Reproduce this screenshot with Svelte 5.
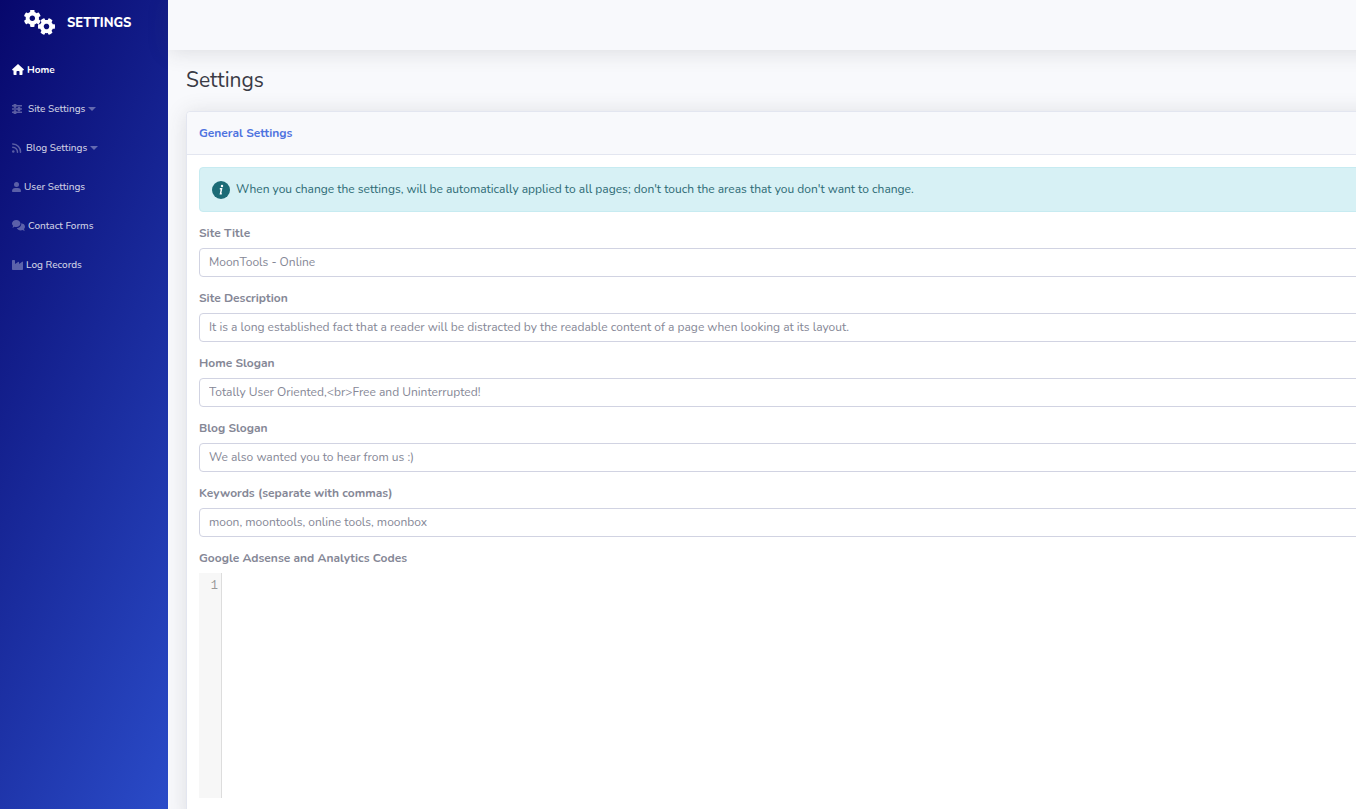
<script>
  const menu = [
    { label: 'Home', icon: 'home', active: true },
    { label: 'Site Settings', icon: 'sliders', dropdown: true },
    { label: 'Blog Settings', icon: 'rss', dropdown: true },
    { label: 'User Settings', icon: 'user' },
    { label: 'Contact Forms', icon: 'comments' },
    { label: 'Log Records', icon: 'industry' },
  ];

  let fields = $state([
    { id: 'site-title', label: 'Site Title', value: 'MoonTools - Online' },
    {
      id: 'site-description',
      label: 'Site Description',
      value: 'It is a long established fact that a reader will be distracted by the readable content of a page when looking at its layout.',
    },
    { id: 'home-slogan', label: 'Home Slogan', value: 'Totally User Oriented,<br>Free and Uninterrupted!' },
    { id: 'blog-slogan', label: 'Blog Slogan', value: 'We also wanted you to hear from us :)' },
    { id: 'keywords', label: 'Keywords (separate with commas)', value: 'moon, moontools, online tools, moonbox' },
  ]);

  let code = $state('');
  let lines = $derived(code.split('\n').length);

  const gear =
    'M487.4 315.7l-42.6-24.6c4.3-23.2 4.3-47 0-70.2l42.6-24.6c4.9-2.8 7.1-8.6 5.5-14-11.1-35.6-30-67.8-54.7-94.6-3.8-4.1-10-5.1-14.8-2.3L380.8 110c-17.9-15.4-38.5-27.3-60.8-35.1V25.8c0-5.6-3.9-10.5-9.4-11.7-36.7-8.2-74.3-7.8-109.2 0-5.5 1.2-9.4 6.1-9.4 11.7V75c-22.2 7.9-42.8 19.8-60.8 35.1L88.7 85.5c-4.9-2.8-11-1.9-14.8 2.3-24.7 26.7-43.6 58.9-54.7 94.6-1.7 5.4.6 11.2 5.5 14L67.3 221c-4.3 23.2-4.3 47 0 70.2l-42.6 24.6c-4.9 2.8-7.1 8.6-5.5 14 11.1 35.6 30 67.8 54.7 94.6 3.8 4.1 10 5.1 14.8 2.3l42.6-24.6c17.9 15.4 38.5 27.3 60.8 35.1v49.2c0 5.6 3.9 10.5 9.4 11.7 36.7 8.2 74.3 7.8 109.2 0 5.5-1.2 9.4-6.1 9.4-11.7v-49.2c22.2-7.9 42.8-19.8 60.8-35.1l42.6 24.6c4.9 2.8 11 1.9 14.8-2.3 24.7-26.7 43.6-58.9 54.7-94.6 1.5-5.5-.7-11.3-5.6-14.1zM256 336c-44.1 0-80-35.9-80-80s35.9-80 80-80 80 35.9 80 80-35.9 80-80 80z';
</script>

{#snippet icon(name)}
  {#if name === 'home'}
    <svg class="icon" width="12" height="11" viewBox="0 0 24 22" aria-hidden="true">
      <path d="M12 0 24 11l-1.600 2H21v7.500q0 1.500-1.500 1.500H15v-6.500q0-1.500-1.500-1.500h-3Q9 14 9 15.500V22H4.500Q3 22 3 20.500V13H1.600L0 11z" />
    </svg>
  {:else if name === 'sliders'}
    <svg class="icon" width="13" height="10" viewBox="0 0 26 20" aria-hidden="true">
      <path d="M0 2h3a3 3 0 0 1 6 0H20v3H9a3 3 0 0 1-6 0H0zM0 8.500h11a3 3 0 0 1 6 0H20v3h-3a3 3 0 0 1-6 0H0zM0 15h3a3 3 0 0 1 6 0H20v3H9a3 3 0 0 1-6 0H0z" />
    </svg>
  {:else if name === 'rss'}
    <svg class="icon" width="11" height="10" viewBox="0 0 22 20" aria-hidden="true">
      <circle cx="2.500" cy="17" r="2.500" />
      <path class="stroke" d="M1.500 2A15.500 15.500 0 0 1 17 18.500M1.500 8.500a9.500 9.500 0 0 1 9.500 10" />
    </svg>
  {:else if name === 'user'}
    <svg class="icon" width="9" height="10" viewBox="0 0 18 20" aria-hidden="true">
      <circle cx="9" cy="5" r="5" />
      <path d="M0 18.500C0 14 2.800 12 6.500 12h5c3.700 0 6.500 2 6.500 6.500q0 1.500-1.500 1.500h-15Q0 20 0 18.500z" />
    </svg>
  {:else if name === 'comments'}
    <svg class="icon" width="13" height="11" viewBox="0 0 26 22" aria-hidden="true">
      <path d="M8.500 0C13.200 0 17 3.100 17 7s-3.800 7-8.500 7q-2 0-3.700-.7Q2.800 15 .4 15q1.700-1.800 1.900-3.700Q0 9.500 0 7c0-3.900 3.800-7 8.500-7z" />
      <path d="M18.500 6.500C23 7 26 9.700 26 13.300q0 2.500-2 4.500.3 2.300 1.700 4-2.700-.2-4.700-1.600-1.600.6-3.500.6c-3.600 0-6.700-1.900-7.900-4.700 5.300-.3 9.300-4 8.900-9.600z" />
    </svg>
  {:else}
    <svg class="icon" width="11" height="10" viewBox="0 0 22 20" aria-hidden="true">
      <path d="M1.500 0h3Q6 0 6 1.500V8l7-4.500q1-.5 1 .8V8l6.500-4.500Q22 2.700 22 4.300v14.200q0 1.500-1.500 1.500h-19Q0 20 0 18.500v-17Q0 0 1.500 0z" />
    </svg>
  {/if}
{/snippet}

<div class="wrapper">
  <nav class="sidebar">
    <a class="brand" href="#settings">
      <svg width="32" height="26" viewBox="0 0 32 26" aria-hidden="true">
        <path transform="translate(-.5 -.5) scale(.0345)" d={gear} />
        <path transform="translate(22.500 16.500) rotate(30) scale(.0345) translate(-256 -256)" d={gear} />
      </svg>
      <span>SETTINGS</span>
    </a>
    <ul>
      {#each menu as item}
        <li>
          <a class="nav-link" class:active={item.active} href="#{item.icon}">
            {@render icon(item.icon)}
            <span>{item.label}</span>
            {#if item.dropdown}
              <i class="caret"></i>
            {/if}
          </a>
        </li>
      {/each}
    </ul>
  </nav>

  <div class="content">
    <header class="topbar"></header>
    <main>
      <h1>Settings</h1>
      <section class="card">
        <div class="card-header">
          <h2>General Settings</h2>
        </div>
        <form class="card-body">
          <div class="alert" role="alert">
            <svg width="18" height="18" viewBox="0 0 18 18" aria-hidden="true">
              <circle cx="9" cy="9" r="9" />
              <circle class="mark" cx="10" cy="5" r="1.200" />
              <path class="mark-line" d="M7.800 7.800h1.700L8.500 12.800h1.300" />
            </svg>
            <span>When you change the settings, will be automatically applied to all pages; don't touch the areas that you don't want to change.</span>
          </div>

          {#each fields as field}
            <div class="form-group">
              <label for={field.id}>{field.label}</label>
              <input id={field.id} type="text" bind:value={field.value} />
            </div>
          {/each}

          <div class="form-group">
            <label for="codes">Google Adsense and Analytics Codes</label>
            <div class="editor">
              <div class="gutter">
                {#each { length: lines } as _, i}
                  <div>{i + 1}</div>
                {/each}
              </div>
              <textarea id="codes" spellcheck="false" bind:value={code}></textarea>
            </div>
          </div>
        </form>
      </section>
    </main>
  </div>
</div>

<style>
  :global(body) {
    margin: 0;
    background: #f8f9fc;
  }

  .wrapper {
    display: flex;
    height: 100vh;
    overflow: hidden;
    font-family: Nunito, Lato, sans-serif;
    font-size: 12px;
    line-height: 18px;
    color: #858796;
  }

  .wrapper :global(*) {
    box-sizing: border-box;
  }

  .sidebar {
    flex: 0 0 168px;
    background: linear-gradient(115deg, #07076c 0%, #2a4bc8 100%);
  }

  .brand {
    display: flex;
    align-items: center;
    gap: 11px;
    height: 50px;
    padding: 0 24px 5px;
    color: #fff;
    font-size: 13px;
    font-weight: 800;
    text-decoration: none;
  }

  .brand svg {
    fill: #fff;
  }

  ul {
    margin: 0;
    padding: 0;
    list-style: none;
  }

  .nav-link {
    display: flex;
    align-items: center;
    gap: 3px;
    height: 39px;
    padding: 0 12px;
    color: rgba(255, 255, 255, 0.8);
    font-size: 10px;
    font-weight: 500;
    text-decoration: none;
  }

  .nav-link.active {
    color: #fff;
    font-weight: 700;
  }

  .icon {
    fill: currentColor;
    opacity: 0.4;
  }

  .active .icon {
    opacity: 1;
  }

  .stroke {
    fill: none;
    stroke: currentColor;
    stroke-width: 3;
    stroke-linecap: round;
  }

  .caret {
    border: 4px solid transparent;
    border-top-color: rgba(255, 255, 255, 0.35);
    border-bottom: 0;
  }

  /* runs on past the window edge, so the card's right side stays out of view */
  .content {
    flex: 1;
    min-width: 0;
    margin-right: -24px;
  }

  .topbar {
    height: 50px;
    margin-bottom: 18px;
    background: #f8f9fc;
    box-shadow: 0 2px 21px rgba(58, 59, 69, 0.15);
  }

  main {
    padding-left: 18px;
  }

  h1 {
    margin: 0 0 18px;
    color: #3a3b45;
    font-size: 21px;
    font-weight: 400;
    line-height: 25px;
  }

  .card {
    border: 1px solid #e3e6f0;
    border-radius: 4px;
    background: #fff;
    box-shadow: 0 2px 21px rgba(58, 59, 69, 0.15);
  }

  .card-header {
    padding: 12px;
    border-bottom: 1px solid #e3e6f0;
    border-radius: 4px 4px 0 0;
    background: #f8f9fc;
  }

  h2 {
    margin: 0;
    color: #4e73df;
    font-size: 12px;
    font-weight: 700;
    line-height: 18px;
  }

  .card-body {
    padding: 12px;
  }

  .alert {
    display: flex;
    align-items: center;
    gap: 6px;
    margin-bottom: 12px;
    padding: 12px;
    border: 1px solid #c7ebf1;
    border-radius: 4px;
    background: #d7f1f5;
    color: #2c6a74;
  }

  .alert svg {
    fill: #1c6b76;
  }

  .alert span {
    padding-bottom: 1px;
  }

  .alert .mark {
    fill: #fff;
  }

  .mark-line {
    fill: none;
    stroke: #fff;
    stroke-width: 1.5;
  }

  .form-group {
    margin-bottom: 12px;
  }

  label {
    display: block;
    margin-bottom: 6px;
    font-weight: 700;
  }

  input {
    display: block;
    width: 100%;
    height: 29px;
    padding: 0 9px 1px;
    border: 1px solid #d1d3e2;
    border-radius: 4px;
    background: #fff;
    color: #858796;
    font: inherit;
  }

  .editor {
    display: flex;
    height: 225px;
  }

  .gutter {
    width: 23px;
    padding: 4px 3px 0 0;
    border-right: 1px solid #ddd;
    background: #f7f7f7;
    color: #999;
    font-family: "Liberation Mono", monospace;
    text-align: right;
  }

  textarea {
    flex: 1;
    padding: 4px;
    border: 0;
    outline: 0;
    resize: none;
    font: inherit;
  }
</style>
